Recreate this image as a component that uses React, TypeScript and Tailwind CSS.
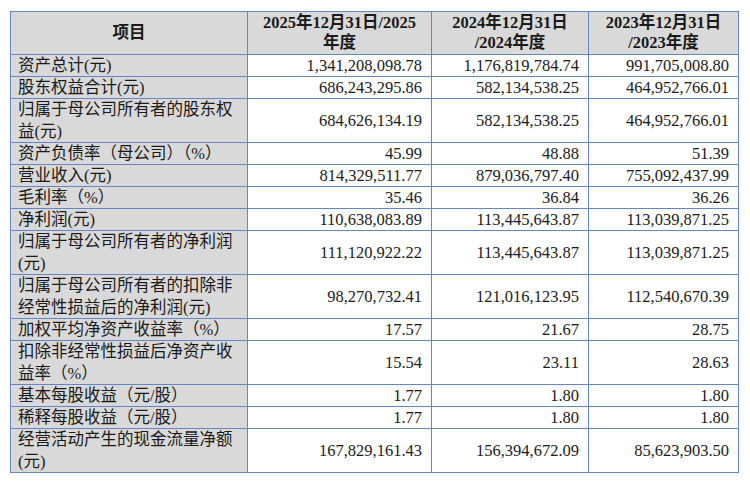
const rows: { label: string[]; values: string[] }[] = [
  { label: ["资产总计(元)"], values: ["1,341,208,098.78", "1,176,819,784.74", "991,705,008.80"] },
  { label: ["股东权益合计(元)"], values: ["686,243,295.86", "582,134,538.25", "464,952,766.01"] },
  { label: ["归属于母公司所有者的股东权", "益(元)"], values: ["684,626,134.19", "582,134,538.25", "464,952,766.01"] },
  { label: ["资产负债率（母公司）（%）"], values: ["45.99", "48.88", "51.39"] },
  { label: ["营业收入(元)"], values: ["814,329,511.77", "879,036,797.40", "755,092,437.99"] },
  { label: ["毛利率（%）"], values: ["35.46", "36.84", "36.26"] },
  { label: ["净利润(元)"], values: ["110,638,083.89", "113,445,643.87", "113,039,871.25"] },
  { label: ["归属于母公司所有者的净利润", "(元)"], values: ["111,120,922.22", "113,445,643.87", "113,039,871.25"] },
  { label: ["归属于母公司所有者的扣除非", "经常性损益后的净利润(元)"], values: ["98,270,732.41", "121,016,123.95", "112,540,670.39"] },
  { label: ["加权平均净资产收益率（%）"], values: ["17.57", "21.67", "28.75"] },
  { label: ["扣除非经常性损益后净资产收", "益率（%）"], values: ["15.54", "23.11", "28.63"] },
  { label: ["基本每股收益（元/股）"], values: ["1.77", "1.80", "1.80"] },
  { label: ["稀释每股收益（元/股）"], values: ["1.77", "1.80", "1.80"] },
  { label: ["经营活动产生的现金流量净额", "(元)"], values: ["167,829,161.43", "156,394,672.09", "85,623,903.50"] },
];

const cell = "border border-[#6486c6] p-0 align-middle";

export default function App() {
  return (
    <div
      className="w-[750px] h-[483px] bg-white pt-[11px] pl-[10px] text-[#1a1a1a]"
      style={{ fontFamily: '"Liberation Serif", "Noto Sans CJK SC", serif' }}
    >
      <table className="border-collapse table-fixed text-[16.5px]">
        <colgroup>
          <col className="w-[237px]" />
          <col className="w-[184px]" />
          <col className="w-[157px]" />
          <col className="w-[150px]" />
        </colgroup>
        <thead>
          <tr className="bg-[#d9d9d9] font-bold">
            <th className={cell}>
              <div className="h-[42px] flex items-center justify-center overflow-hidden">项目</div>
            </th>
            <th className={cell}>
              <div className="h-[42px] flex flex-col justify-center overflow-hidden leading-[20px]">
                <div className="h-[20px]">2025年12月31日/2025</div>
                <div className="h-[20px]">年度</div>
              </div>
            </th>
            <th className={cell}>
              <div className="h-[42px] flex flex-col justify-center overflow-hidden leading-[20px]">
                <div className="h-[20px]">2024年12月31日</div>
                <div className="h-[20px]">/2024年度</div>
              </div>
            </th>
            <th className={cell}>
              <div className="h-[42px] flex flex-col justify-center overflow-hidden leading-[20px]">
                <div className="h-[20px]">2023年12月31日</div>
                <div className="h-[20px]">/2023年度</div>
              </div>
            </th>
          </tr>
        </thead>
        <tbody>
          {rows.map((r) => {
            const h = r.label.length > 1 ? "h-[43px]" : "h-[21px]";
            return (
              <tr key={r.label.join("")}>
                <td className={`${cell} bg-[#d9d9d9]`}>
                  <div className={`${h} flex flex-col justify-center overflow-hidden pl-[7px] whitespace-nowrap`}>
                    {r.label.map((l, i) => (
                      <div key={i} className="h-[21.5px] leading-[21.5px]">
                        {l}
                      </div>
                    ))}
                  </div>
                </td>
                {r.values.map((v, i) => (
                  <td key={i} className={cell}>
                    <div className={`${h} flex items-center justify-end overflow-hidden pr-[9px] whitespace-nowrap leading-[21px]`}>
                      {v}
                    </div>
                  </td>
                ))}
              </tr>
            );
          })}
        </tbody>
      </table>
    </div>
  );
}
